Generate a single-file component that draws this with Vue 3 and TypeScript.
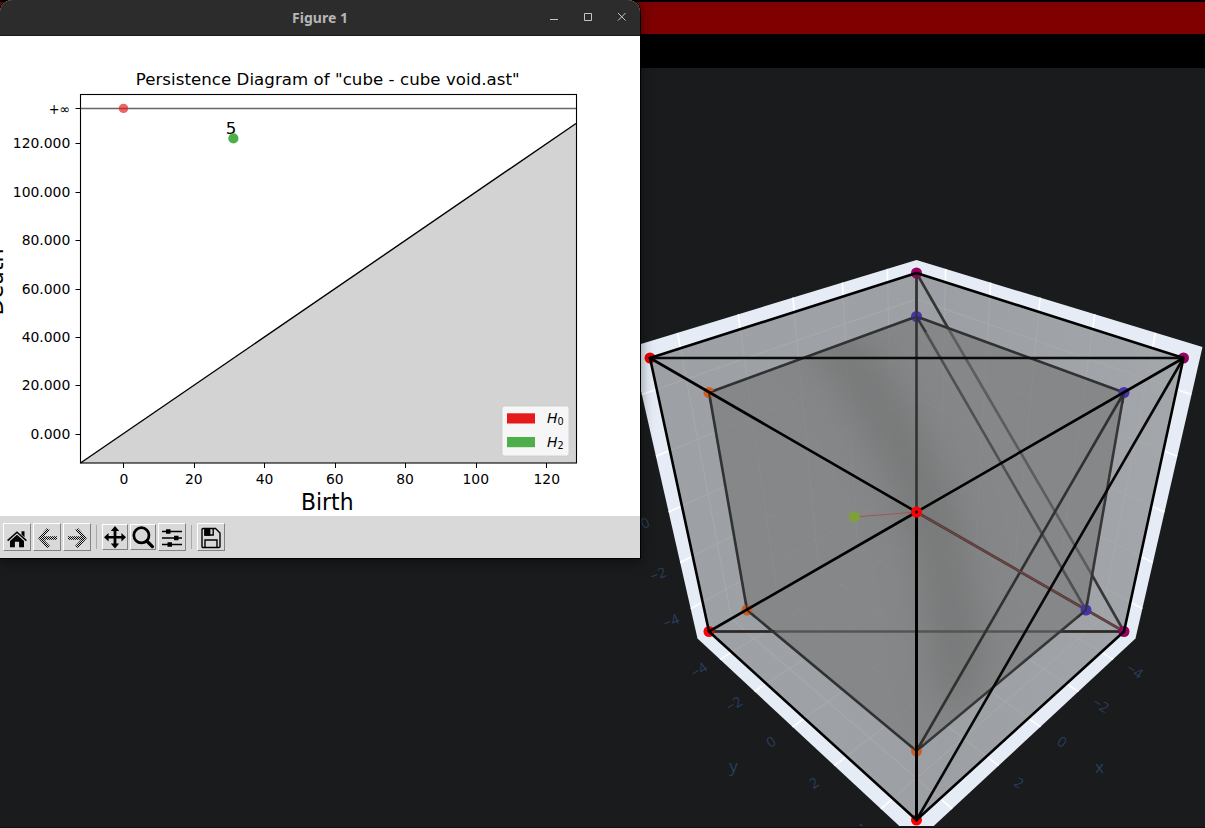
<script setup lang="ts">
type Pt = [number, number]
interface Segment { a: Pt; b: Pt; color: string; width: number }

const cx = 916.5
const outer = { t: [cx, 273] as Pt, l: [650, 358] as Pt, r: [1183.5, 358] as Pt, bl: [709, 631.5] as Pt, br: [1124, 631.5] as Pt, b: [cx, 820] as Pt }
const inner = { t: [cx, 316.5] as Pt, l: [709, 392.5] as Pt, r: [1124, 392.5] as Pt, bl: [747, 610] as Pt, br: [1086, 610] as Pt, b: [cx, 751] as Pt }
const mid: Pt = [cx, 512]

const poly = (pts: Pt[]): string => pts.map(p => p.join(',')).join(' ')
const outerHull = poly([outer.t, outer.r, outer.br, outer.b, outer.bl, outer.l])
const innerHull = poly([inner.t, inner.r, inner.br, inner.b, inner.bl, inner.l])

// Maps the unit square onto a perspective quad.
function project(q: Pt[], u: number, v: number): Pt {
  const [p0, p1, p2, p3] = q
  const dx1 = p1[0] - p2[0], dx2 = p3[0] - p2[0], dx3 = p0[0] - p1[0] + p2[0] - p3[0]
  const dy1 = p1[1] - p2[1], dy2 = p3[1] - p2[1], dy3 = p0[1] - p1[1] + p2[1] - p3[1]
  const det = dx1 * dy2 - dx2 * dy1
  const g = (dx3 * dy2 - dx2 * dy3) / det
  const h = (dx1 * dy3 - dx3 * dy1) / det
  const w = g * u + h * v + 1
  return [
    ((p1[0] - p0[0] + g * p1[0]) * u + (p3[0] - p0[0] + h * p3[0]) * v + p0[0]) / w,
    ((p1[1] - p0[1] + g * p1[1]) * u + (p3[1] - p0[1] + h * p3[1]) * v + p0[1]) / w,
  ]
}

const walls: Pt[][] = [
  [[631, 347], [cx, 260], mid, [697.5, 638.5]],
  [[1202, 347], [cx, 260], mid, [1135.5, 638.5]],
  [[697.5, 638.5], mid, [1135.5, 638.5], [cx, 842]],
]
const ticks = [-4, -2, 0, 2, 4].map(k => (k + 5.4) / 10.8)
const grid: [Pt, Pt][] = walls.flatMap(q =>
  ticks.flatMap(t => [
    [project(q, t, 0), project(q, t, 1)] as [Pt, Pt],
    [project(q, 0, t), project(q, 1, t)] as [Pt, Pt],
  ]),
)

const seg = (a: Pt, b: Pt, color: string, width = 2.6): Segment => ({ a, b, color, width })
const backEdges: Segment[] = [
  seg(outer.t, [948, 328], '#343434'),
  seg([948, 328], [1092, 575], '#5c5d5d'),
  seg([1092, 575], outer.br, '#373737'),
  seg(inner.t, inner.br, '#4f5050'),
  seg(outer.bl, outer.br, '#555455'),
  seg(outer.bl, [775, 631.5], '#2b2829'),
  seg([1060, 631.5], outer.br, '#2b2829'),
  seg(inner.t, inner.r, '#303132'),
  seg(inner.t, inner.l, '#303132'),
  seg(inner.l, inner.bl, '#303132'),
  seg(inner.r, inner.br, '#373536'),
  seg(inner.bl, inner.b, '#303132'),
  seg(inner.br, inner.b, '#373738'),
  seg(inner.r, inner.b, '#303131'),
  seg(outer.t, mid, '#303132'),
  seg(mid, outer.br, '#4c3c3c', 2.8),
]
const frontEdges: Segment[] = [
  seg(outer.t, outer.l, '#000'), seg(outer.t, outer.r, '#000'),
  seg(outer.l, outer.bl, '#000'), seg(outer.r, outer.br, '#000'),
  seg(outer.bl, outer.b, '#000'), seg(outer.br, outer.b, '#000'),
  seg(outer.l, outer.r, '#0b0b0b', 2.4), seg(outer.r, outer.b, '#070707'),
  seg(outer.l, mid, '#000'), seg(outer.r, mid, '#000'),
  seg(outer.bl, mid, '#000'), seg(mid, outer.b, '#000', 3),
]
const dots: { p: Pt; c: string }[] = [
  { p: outer.t, c: '#990060' }, { p: outer.r, c: '#990060' }, { p: outer.br, c: '#990060' },
  { p: outer.l, c: '#f00000' }, { p: outer.bl, c: '#ff0000' }, { p: outer.b, c: '#ff0000' },
  { p: inner.t, c: '#4633a6' }, { p: inner.r, c: '#4633a6' }, { p: inner.br, c: '#4633a6' },
  { p: inner.l, c: '#c95f25' }, { p: inner.bl, c: '#c95f25' }, { p: inner.b, c: '#c95f25' },
]
const sceneLabels: { x: number; y: number; r: number; t: string }[] = [
  { x: 645, y: 523, r: -25, t: '0' }, { x: 658, y: 574, r: -22, t: '−2' }, { x: 671, y: 621, r: -22, t: '−4' },
  { x: 699, y: 670, r: -32, t: '−4' }, { x: 734, y: 704, r: -32, t: '−2' }, { x: 771, y: 742, r: -32, t: '0' },
  { x: 814, y: 783, r: -32, t: '2' }, { x: 862, y: 829, r: -32, t: '4' },
  { x: 1135, y: 671, r: 32, t: '−4' }, { x: 1101, y: 705, r: 32, t: '−2' }, { x: 1062, y: 742, r: 32, t: '0' },
  { x: 1019, y: 783, r: 32, t: '2' },
]

const xTicks = [0, 20, 40, 60, 80, 100, 120].map((v, i) => ({ label: String(v), x: [123.5, 194.5, 264.5, 335.5, 405.5, 476.5, 546.5][i], tx: [123.8, 193.8, 264.5, 334.8, 405, 475.8, 546.8][i] }))
const yTicks = ['0.000', '20.000', '40.000', '60.000', '80.000', '100.000', '120.000'].map((label, i) => ({ label, y: [434.5, 385.5, 337.5, 289.5, 240.5, 192.5, 143.5][i] }))
</script>

<template>
  <div class="desktop">
    <div class="edge"></div>
    <div class="banner"></div>
    <div class="strip"></div>
    <svg class="scene" viewBox="0 68 1205 760" width="1205" height="760">
      <defs>
        <filter id="soft" x="-60%" y="-60%" width="220%" height="220%" color-interpolation-filters="sRGB"><feGaussianBlur stdDeviation="18" /></filter>
        <clipPath id="hull"><polygon :points="outerHull" /></clipPath>
        <clipPath id="innerClip"><polygon :points="innerHull" /></clipPath>
        <clipPath id="canvas"><rect x="640" y="68" width="565" height="758" /></clipPath>
        <linearGradient id="shell" x1="0" y1="0" x2="1" y2="0">
          <stop offset="0" stop-color="#9da0a5" /><stop offset="0.35" stop-color="#9ea2a7" />
          <stop offset="0.55" stop-color="#9c9fa4" /><stop offset="1" stop-color="#a3a6aa" />
        </linearGradient>
      </defs>
      <g clip-path="url(#canvas)">
        <polygon points="916.5,260 1202.5,347 1135.5,638.5 916.5,842 697.5,638.5 631,347" fill="#e5ecf6" />
        <line v-for="(g, i) in grid" :key="'g' + i" :x1="g[0][0]" :y1="g[0][1]" :x2="g[1][0]" :y2="g[1][1]" stroke="#fff" stroke-width="1.6" />
        <polygon :points="outerHull" fill="url(#shell)" />
        <g clip-path="url(#hull)">
          <line v-for="(g, i) in grid" :key="'h' + i" :x1="g[0][0]" :y1="g[0][1]" :x2="g[1][0]" :y2="g[1][1]" stroke="#acabab" stroke-width="1.2" opacity="0.7" />
        </g>
        <polygon :points="innerHull" fill="#868788" />
        <g clip-path="url(#innerClip)">
          <line v-for="(g, i) in grid" :key="'k' + i" :x1="g[0][0]" :y1="g[0][1]" :x2="g[1][0]" :y2="g[1][1]" stroke="#929292" stroke-width="1" opacity="0.38" />
          <g filter="url(#soft)">
            <path d="M790 320 L870 340 L935 450 L960 520 L985 650 L965 720 L935 690 L918 560 L890 480 L840 390Z" fill="#707171" opacity="0.62" />
          </g>
        </g>
        <line v-for="(s, i) in backEdges" :key="'b' + i" :x1="s.a[0]" :y1="s.a[1]" :x2="s.b[0]" :y2="s.b[1]" :stroke="s.color" :stroke-width="s.width" />
        <line x1="916.5" y1="512" x2="1124" y2="631.5" stroke="#964444" stroke-width="0.8" />
        <line x1="854" y1="517" x2="916.5" y2="512" stroke="#a05050" stroke-width="0.9" />
        <circle v-for="(d, i) in dots" :key="'d' + i" :cx="d.p[0]" :cy="d.p[1]" r="5.5" :fill="d.c" />
        <circle cx="854.3" cy="516.7" r="5.5" fill="#7da03b" />
        <path d="M916.5 275V322M916.5 317 926 332M907 320l9.5-3 9.5 3M1124 393l-5 9M1124 393l-1.5 10M1086 610l1-9M1086 610l-8 7M747 610l-1-9M747 610l8 7M709 393l8-3M709 393l1.5 9M916.5 751l-7-6M916.5 751l7-6M916.5 751l5-9" stroke="#303132" stroke-width="1.8" fill="none" />
        <line v-for="(s, i) in frontEdges" :key="'f' + i" :x1="s.a[0]" :y1="s.a[1]" :x2="s.b[0]" :y2="s.b[1]" :stroke="s.color" :stroke-width="s.width" stroke-linecap="round" />
        <circle cx="916.5" cy="512" r="3.5" fill="#000" stroke="#ff0000" stroke-width="4" />
        <g class="axis-text">
          <text v-for="(l, i) in sceneLabels" :key="'l' + i" :transform="`translate(${l.x} ${l.y}) rotate(${l.r})`" y="5">{{ l.t }}</text>
          <text x="733.5" y="771.5" class="axis-name">y</text>
          <text x="1099.5" y="773" class="axis-name">x</text>
        </g>
      </g>
      <rect x="0" y="827" width="1205" height="1" fill="#130e11" />
    </svg>

    <section class="window">
      <header class="titlebar">
        <span class="title">Figure 1</span>
        <svg class="controls" width="90" height="35" viewBox="550 0 90 35" fill="none" stroke="#c5c5c5">
          <path d="M550 19.5h8M584.5 13.5h7v7h-7zM618 13l7.5 7.5M625.5 13l-7.5 7.5" />
        </svg>
      </header>
      <svg class="plot" viewBox="0 36 640 480" width="640" height="480">
        <polygon points="80.5,463 576,123.5 576,463" fill="#d3d3d3" />
        <path d="M80.5 463 576 123.5" stroke="#000" stroke-width="1.4" />
        <path d="M80.5 108.5H576" stroke="#666" stroke-width="1.3" />
        <rect x="80.5" y="94.5" width="496" height="368.5" fill="none" stroke="#000" stroke-width="1.1" />
        <circle cx="123.5" cy="108.4" r="4.7" fill="#e41a1c" fill-opacity="0.68" />
        <text x="231" y="134" class="num-lg" text-anchor="middle">5</text>
        <circle cx="233.4" cy="138.4" r="5.1" fill="#4daf4a" />
        <text x="327.7" y="85" class="num-lg" text-anchor="middle" textLength="384">Persistence Diagram of "cube - cube void.ast"</text>
        <g v-for="t in yTicks" :key="t.label">
          <path :d="`M75.5 ${t.y}H80.5`" stroke="#000" />
          <text x="70.3" :y="t.y + 4.8" text-anchor="end">{{ t.label }}</text>
        </g>
        <path d="M75.5 108.5H80.5" stroke="#000" />
        <text x="70.3" y="113.5" text-anchor="end" textLength="21.5" lengthAdjust="spacingAndGlyphs">+∞</text>
        <g v-for="t in xTicks" :key="t.label">
          <path :d="`M${t.x} 463V468`" stroke="#000" />
          <text :x="t.tx" y="484" text-anchor="middle">{{ t.label }}</text>
        </g>
        <text x="327.3" y="510" class="axis-title" text-anchor="middle" textLength="52.5" lengthAdjust="spacingAndGlyphs">Birth</text>
        <text class="axis-title" text-anchor="middle" transform="translate(3 282) rotate(-90)">Death</text>
        <rect x="502" y="406" width="67" height="50" rx="2.5" fill="#fff" fill-opacity="0.8" stroke="#ccc" stroke-opacity="0.8" />
        <rect x="507" y="413.3" width="28" height="10.2" fill="#e41a1c" />
        <rect x="507" y="437" width="28" height="10.2" fill="#4daf4a" />
        <text x="547" y="422.5"><tspan class="ital">H</tspan><tspan class="sub" dy="2">0</tspan></text>
        <text x="547" y="446.5"><tspan class="ital">H</tspan><tspan class="sub" dy="2">2</tspan></text>
      </svg>
      <footer class="toolbar">
        <button class="tool"><svg viewBox="0 0 26 26"><path d="M3.6 16.6 13 8.2l9.4 8.4" fill="none" stroke="#000" stroke-width="1.5" /><path d="M6 17 13 10.8 20 17v6.3h-4.9v-5.5h-4.2v5.5H6zM17.5 7.2h3v6l-3-2.7z" /></svg></button>
        <button class="tool"><svg viewBox="0 0 26 26"><defs><pattern id="dither" width="2" height="2" patternUnits="userSpaceOnUse"><path d="M0 0h1v1H0zM1 1h1v1H1z" /></pattern></defs><path d="M4 14 13 4l3 2-6 6.2h13v3.6H10l6 6.2-3 2z" fill="url(#dither)" /></svg></button>
        <button class="tool"><svg viewBox="0 0 26 26"><path d="M23 14 14 4l-3 2 6 6.2H4v3.6h13L11 22l3 2z" fill="url(#dither)" /></svg></button>
        <i class="divider"></i>
        <button class="tool small"><svg viewBox="0 0 24 24"><path d="M12 1l4.2 5h-2.8v5h5V8.1L23 12.3l-4.6 4.2v-2.9h-5v5h2.8L12 23.5l-4.2-4.9h2.8v-5h-5v2.9L1 12.3l4.6-4.2V11h5V6H7.8z" /></svg></button>
        <button class="tool small"><svg viewBox="0 0 24 24"><circle cx="10.4" cy="10.3" r="7.6" fill="none" stroke="#000" stroke-width="2.7" /><path d="M15.8 16l5.6 5.6" stroke="#000" stroke-width="3.3" stroke-linecap="round" /></svg></button>
        <button class="tool"><svg viewBox="0 0 26 26"><path d="M3 7.5h20M3 14h20M3 20.5h20" stroke="#000" stroke-width="1.5" /><path d="M7 5.3h4.5v4.4H7zM15 11.8h4.5v4.4H15zM8.5 18.3H13v4.4H8.5z" /></svg></button>
        <i class="divider"></i>
        <button class="tool"><svg viewBox="0 0 26 26" fill="none" stroke="#000" stroke-width="1.4"><path d="M5 4.5H17.5l4.5 4.5v13.5a1 1 0 0 1-1 1h-16a1 1 0 0 1-1-1v-17a1 1 0 0 1 1-1zM7 23v-7h12v7M15.2 5v6H7V5" /><path d="M7 5h4.7v6H7z" fill="#000" /></svg></button>
      </footer>
    </section>
  </div>
</template>

<style>
body { margin: 0; overflow: hidden; background: #191b1c; }
</style>
<style scoped>
.desktop { position: relative; width: 1205px; height: 828px; overflow: hidden; background: #191b1c; font-family: "DejaVu Sans", sans-serif; }
.edge { height: 2px; background: #000; }
.banner { height: 32px; background: #800000; }
.strip { height: 34px; background: #000; }
.scene { display: block; }
.axis-text { font-family: "Open Sans", sans-serif; font-size: 14px; fill: #2a3f5f; text-anchor: middle; }
.axis-name { font-size: 17px; }
.window { position: absolute; left: 0; top: 0; width: 640px; height: 558px; border-radius: 12px 12px 0 0; background: #fff; box-shadow: 0 0 0 1px #000, 0 3px 14px rgba(0, 0, 0, 0.5); overflow: hidden; }
.titlebar { box-sizing: border-box; height: 36px; display: flex; align-items: center; justify-content: center; padding-left: 90px; background: #2c2c2c; border-bottom: 1px solid #191919; }
.title { flex: 1; text-align: center; font: bold 14px "Noto Sans", sans-serif; color: #b6b6b6; }
.controls { flex: none; }
.plot { display: block; background: #fff; font-size: 13.9px; }
.num-lg { font-size: 16.6px; }
.axis-title { font-size: 22.2px; }
.ital { font-style: oblique; }
.sub { font-size: 9.7px; }
.toolbar { box-sizing: border-box; height: 42px; display: flex; align-items: center; gap: 2px; padding-left: 3px; background: #d9d9d9; }
.tool { box-sizing: border-box; flex: none; width: 28px; height: 28px; padding: 0; border: 1px solid; border-color: #fff #828282 #828282 #fff; background: #d9d9d9; }
.tool svg { display: block; width: 26px; height: 26px; }
.tool.small { width: 26px; height: 26px; }
.tool.small svg { width: 24px; height: 24px; }
.divider { width: 1px; height: 24px; margin: 0 3px 0 3px; background: #a9a9a9; }
</style>
